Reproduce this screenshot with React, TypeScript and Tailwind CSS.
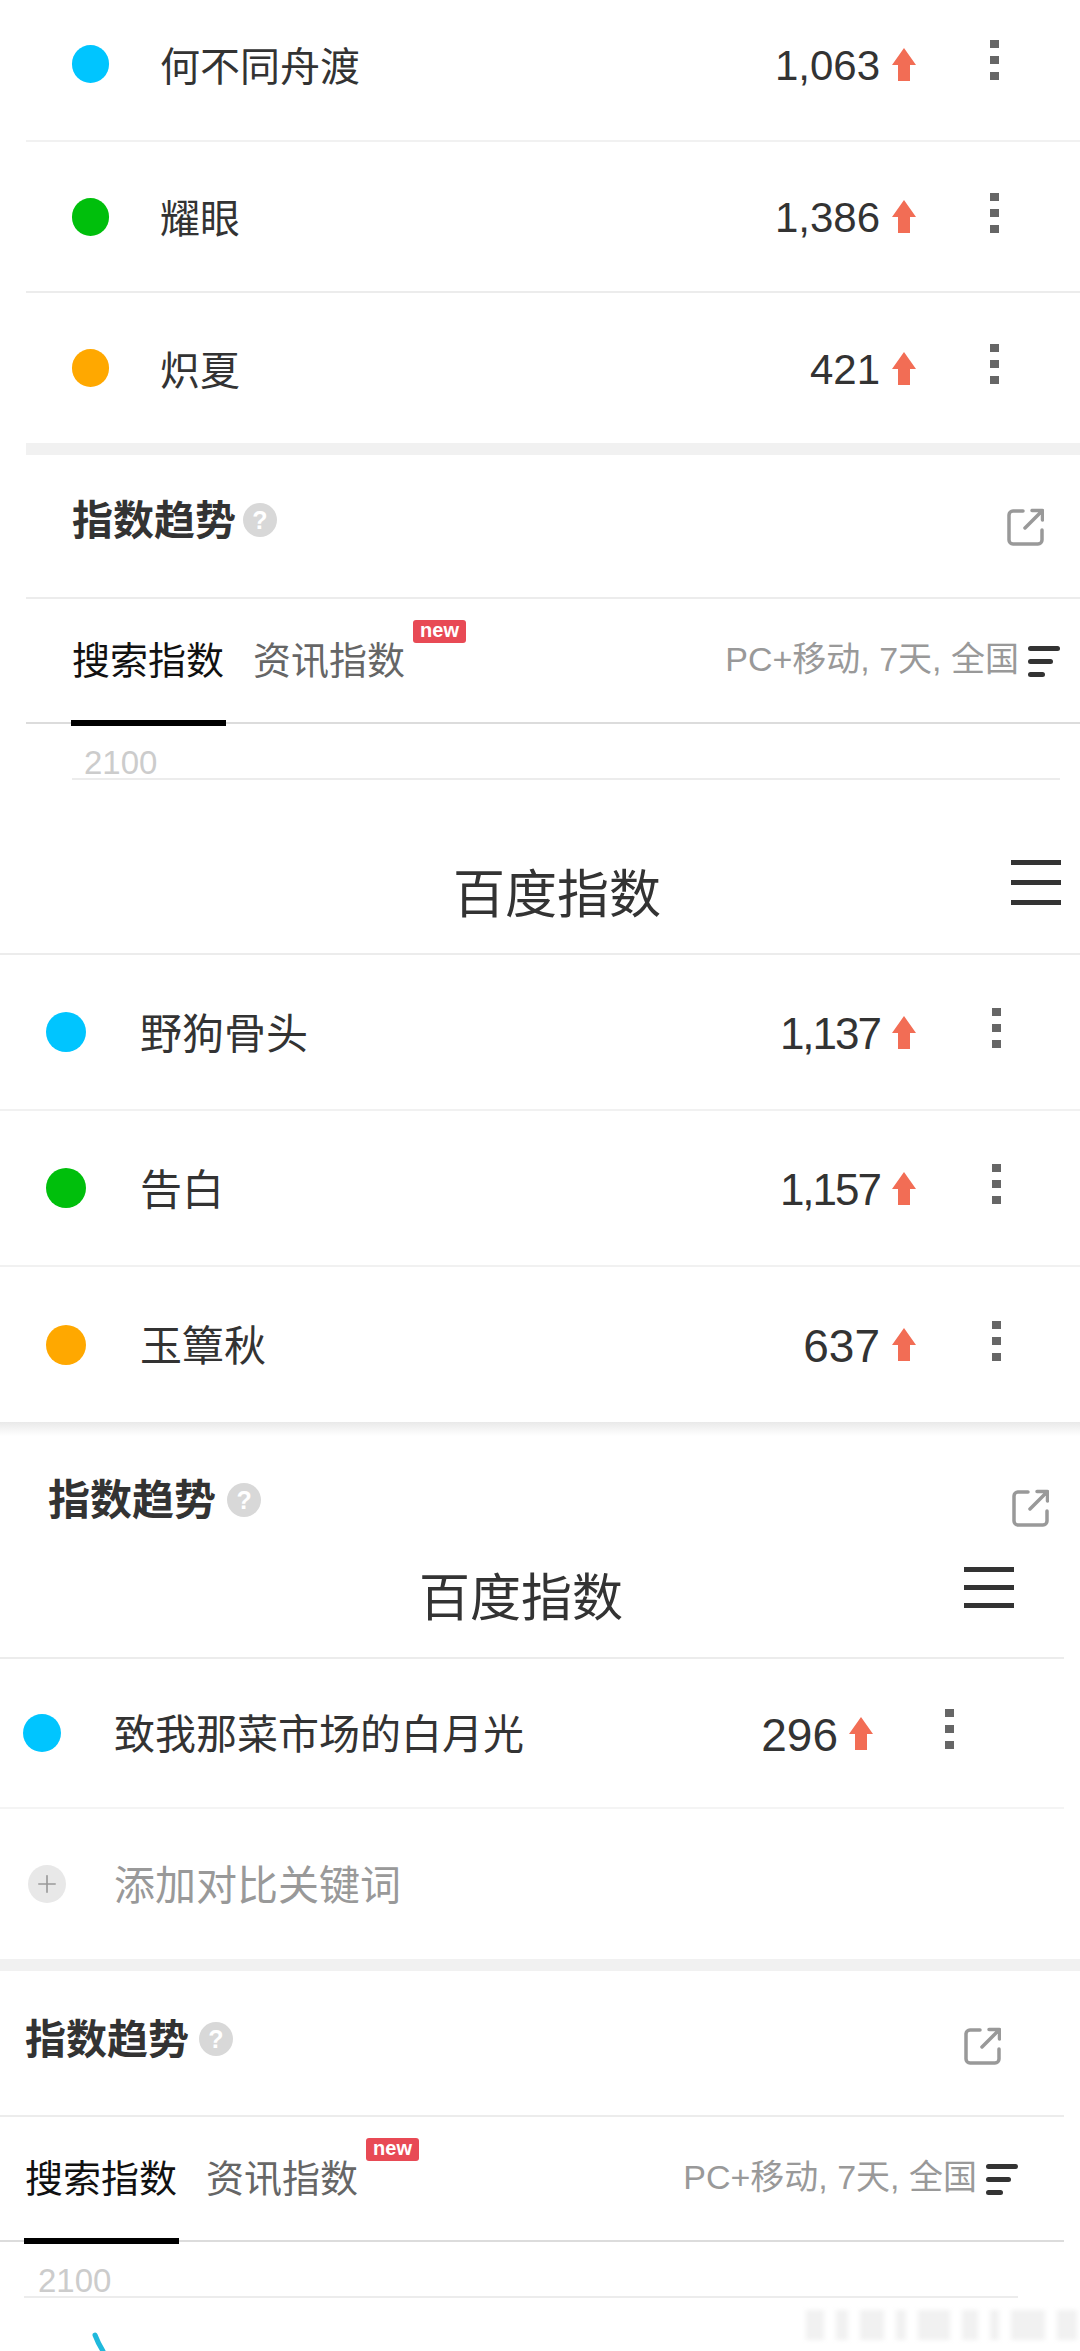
import React from 'react';
import { Plus } from 'lucide-react';

const CJK = "font-['Liberation_Sans','Noto_Sans_CJK_SC',sans-serif]";

function UpArrow() {
  return (
    <svg viewBox="0 0 24 33" className="w-[24px] h-[33px] shrink-0">
      <polygon points="12,0 24,17 18,17 18,33 6,33 6,17 0,17" fill="#f26d55" />
    </svg>
  );
}

function Kebab({ className }: { className: string }) {
  return (
    <div className={`flex flex-col gap-[8px] ${className}`}>
      <div className="w-[9px] h-[8px] bg-[#666]" />
      <div className="w-[9px] h-[8px] bg-[#666]" />
      <div className="w-[9px] h-[8px] bg-[#666]" />
    </div>
  );
}

interface RowProps {
  color: string;
  name: string;
  value: string;
  valueClass: string;
  rowClass: string;
  dotClass: string;
  nameClass: string;
  arrowClass: string;
  kebabClass: string;
}

function KeywordRow({ color, name, value, valueClass, rowClass, dotClass, nameClass, arrowClass, kebabClass }: RowProps) {
  return (
    <div className={`flex items-center ${rowClass}`}>
      <div className={`rounded-full shrink-0 ${color} ${dotClass}`} />
      <span className={`text-[#333] whitespace-nowrap mt-[5px] ${nameClass}`}>{name}</span>
      <span className={`ml-auto text-[#333] leading-none mt-[3px] ${valueClass}`}>{value}</span>
      <div className={arrowClass}>
        <UpArrow />
      </div>
      <Kebab className={kebabClass} />
    </div>
  );
}

function ExternalIcon() {
  return (
    <svg viewBox="0 0 38 38" fill="none" stroke="#999" strokeWidth="3.5" strokeLinecap="round" strokeLinejoin="round" className="w-[38px] h-[38px]">
      <path d="M17 3H7a4 4 0 0 0-4 4v25a4 4 0 0 0 4 4h25a4 4 0 0 0 4-4V22" />
      <path d="M19 20L36 3M26 2.5h10.5V12" />
    </svg>
  );
}

function TitleBar({ className, textClass, helpClass, iconClass }: { className: string; textClass: string; helpClass: string; iconClass: string }) {
  return (
    <div className={`flex items-center ${className}`}>
      <span className={`leading-none font-bold text-[#333] whitespace-nowrap ${textClass}`}>指数趋势</span>
      <div className={`-mt-[2px] w-[34px] h-[34px] rounded-full bg-[#d8d8d8] flex items-center justify-center text-white text-[25px] font-bold leading-none ${helpClass}`}>?</div>
      <div className={`ml-auto ${iconClass}`}>
        <ExternalIcon />
      </div>
    </div>
  );
}

function FilterIcon() {
  return (
    <div className="flex flex-col gap-[8px] shrink-0">
      <div className="w-[32px] h-[5px] rounded-full bg-[#333]" />
      <div className="w-[25px] h-[5px] rounded-full bg-[#333]" />
      <div className="w-[17px] h-[5px] rounded-full bg-[#333]" />
    </div>
  );
}

function TabsBar({ className }: { className: string }) {
  return (
    <div className={`h-[125px] border-b-2 border-[#dcdcdc] flex items-start pt-[43px] ${className}`}>
      <div className="relative h-[82px]">
        <span className="text-[38px] leading-[38px] text-[#111] whitespace-nowrap">搜索指数</span>
        <div className="absolute left-[-1px] right-[-2px] bottom-[-2px] h-[6px] bg-black" />
      </div>
      <div className="relative ml-[29px]">
        <span className="text-[38px] leading-[38px] text-[#666] whitespace-nowrap">资讯指数</span>
        <div className="absolute left-[160px] top-[-22px] w-[53px] h-[23px] rounded-[3px] bg-[#e84a55] text-white text-[20px] font-bold leading-[21px] text-center">new</div>
      </div>
      <div className="ml-auto flex items-center h-[38px]">
        <span className="text-[34px] leading-none text-[#999] whitespace-nowrap -mt-[4px]">PC+移动, 7天, 全国</span>
        <div className="ml-[9px]">
          <FilterIcon />
        </div>
      </div>
    </div>
  );
}

function AxisLabel({ className }: { className: string }) {
  return (
    <div className={`h-[56px] border-b-2 border-[#ececec] flex items-end text-[33px] leading-[30px] text-[#ccc] ${className}`}>
      2100
    </div>
  );
}

function MenuIcon({ className }: { className: string }) {
  return (
    <div className={`flex flex-col justify-between ${className}`}>
      <div className="w-full h-[5px] bg-[#333]" />
      <div className="w-full h-[5px] bg-[#333]" />
      <div className="w-full h-[5px] bg-[#333]" />
    </div>
  );
}

const watermarkBars = ['w-[18px]', 'w-[12px]', 'w-[24px]', 'w-[10px]', 'w-[32px]', 'w-[16px]', 'w-[9px]', 'w-[34px]', 'w-[20px]'];

export default function App() {
  return (
    <div className={`relative w-[1080px] h-[2351px] overflow-hidden bg-white ${CJK}`}>
      {/* first screenshot */}
      <div className="ml-[26px]">
        <KeywordRow color="bg-[#00c5ff]" name="何不同舟渡" value="1,063" valueClass="text-[42px]" rowClass="h-[142px] pb-[12px] pl-[46px] border-b-2 border-[#f1f1f1]" dotClass="w-[37px] h-[38px]" nameClass="ml-[51px] text-[40px] leading-none" arrowClass="ml-[12px]" kebabClass="ml-[74px] -mt-[8px] mr-[81px]" />
        <KeywordRow color="bg-[#00bf0c]" name="耀眼" value="1,386" valueClass="text-[42px]" rowClass="h-[151px] pl-[46px] border-b-2 border-[#ececec]" dotClass="w-[37px] h-[38px]" nameClass="ml-[51px] text-[40px] leading-none" arrowClass="ml-[12px]" kebabClass="ml-[74px] -mt-[8px] mr-[81px]" />
        <KeywordRow color="bg-[#ffa800]" name="炽夏" value="421" valueClass="text-[42px]" rowClass="h-[150px] pl-[46px]" dotClass="w-[37px] h-[38px]" nameClass="ml-[51px] text-[40px] leading-none" arrowClass="ml-[12px]" kebabClass="ml-[74px] -mt-[8px] mr-[81px]" />
        <div className="h-[12px] bg-[#f1f1f1]" />
        <TitleBar className="h-[144px] pl-[46px] pb-[10px] border-b-2 border-[#ececec]" textClass="text-[41px]" helpClass="ml-[7px]" iconClass="mt-[12px] mr-[36px]" />
        <TabsBar className="pl-[46px] pr-[20px]" />
        <AxisLabel className="ml-[46px] mr-[20px] pl-[12px]" />
      </div>

      {/* second screenshot */}
      <div className="mt-[52px] h-[123px] flex items-center pl-[453px] border-b-2 border-[#ececec]">
        <span className="text-[52px] leading-none text-[#333] whitespace-nowrap mt-[4px]">百度指数</span>
        <MenuIcon className="ml-auto mr-[19px] -mt-[20px] w-[50px] h-[45px]" />
      </div>
      <KeywordRow color="bg-[#00c5ff]" name="野狗骨头" value="1,137" valueClass="text-[44px] tracking-[-2px]" rowClass="h-[156px] pl-[46px] border-b-2 border-[#f1f1f1]" dotClass="w-[40px] h-[40px]" nameClass="ml-[54px] text-[42px] leading-none" arrowClass="ml-[12px]" kebabClass="ml-[76px] -mt-[8px] mr-[79px]" />
      <KeywordRow color="bg-[#00bf0c]" name="告白" value="1,157" valueClass="text-[44px] tracking-[-2px]" rowClass="h-[156px] pl-[46px] border-b-2 border-[#f1f1f1]" dotClass="w-[40px] h-[40px]" nameClass="ml-[54px] text-[42px] leading-none" arrowClass="ml-[12px]" kebabClass="ml-[76px] -mt-[8px] mr-[79px]" />
      <KeywordRow color="bg-[#ffa800]" name="玉簟秋" value="637" valueClass="text-[46px]" rowClass="h-[155px] pl-[46px]" dotClass="w-[40px] h-[40px]" nameClass="ml-[54px] text-[42px] leading-none" arrowClass="ml-[12px]" kebabClass="ml-[76px] -mt-[8px] mr-[79px]" />
      <div className="h-[14px] bg-gradient-to-b from-[#e9e9e9] to-white" />
      <TitleBar className="h-[130px] pl-[48px]" textClass="text-[42px]" helpClass="ml-[11px]" iconClass="mt-[14px] mr-[31px]" />

      {/* third screenshot */}
      <div className="mr-[16px] h-[93px] pb-[28px] pl-[419px] flex items-center border-b-2 border-[#ececec]">
        <span className="text-[51px] leading-none text-[#333] whitespace-nowrap mt-[2px]">百度指数</span>
        <MenuIcon className="ml-auto mr-[50px] -mt-[20px] w-[50px] h-[41px]" />
      </div>
      <div className="mr-[16px]">
        <KeywordRow color="bg-[#00c5ff]" name="致我那菜市场的白月光" value="296" valueClass="text-[46px]" rowClass="h-[150px] pl-[23px] border-b-2 border-[#f4f4f4]" dotClass="w-[38px] h-[38px]" nameClass="ml-[53px] text-[41px] leading-none" arrowClass="ml-[11px]" kebabClass="ml-[72px] -mt-[8px] mr-[110px]" />
        <div className="h-[150px] pl-[28px] flex items-center">
          <div className="w-[38px] h-[38px] rounded-full bg-[#e8e8e8] flex items-center justify-center">
            <Plus className="w-[28px] h-[28px] text-[#999]" strokeWidth={1.4} />
          </div>
          <span className="ml-[48px] mt-[5px] text-[41px] leading-none text-[#999] whitespace-nowrap">添加对比关键词</span>
        </div>
      </div>
      <div className="h-[12px] bg-[#f1f1f1]" />
      <div className="mr-[16px]">
        <TitleBar className="h-[146px] pl-[25px] pb-[6px] border-b-2 border-[#ececec]" textClass="text-[41px]" helpClass="ml-[10px]" iconClass="mt-[12px] mr-[63px]" />
        <TabsBar className="pl-[25px] pr-[46px]" />
        <AxisLabel className="ml-[24px] mr-[46px] pl-[14px]" />
      </div>
      <svg viewBox="0 0 40 53" className="w-[40px] h-[53px] ml-[80px]" fill="none">
        <path d="M15 37Q18 45 23 53" stroke="#1fb9dc" strokeWidth="5" strokeLinecap="round" />
      </svg>

      {/* blurred watermark */}
      <div className="absolute left-[806px] top-[2310px] flex gap-[12px] blur-[2px]">
        {watermarkBars.map((w, i) => (
          <div key={i} className={`h-[30px] bg-[#f1f1f1] ${w}`} />
        ))}
      </div>
    </div>
  );
}
